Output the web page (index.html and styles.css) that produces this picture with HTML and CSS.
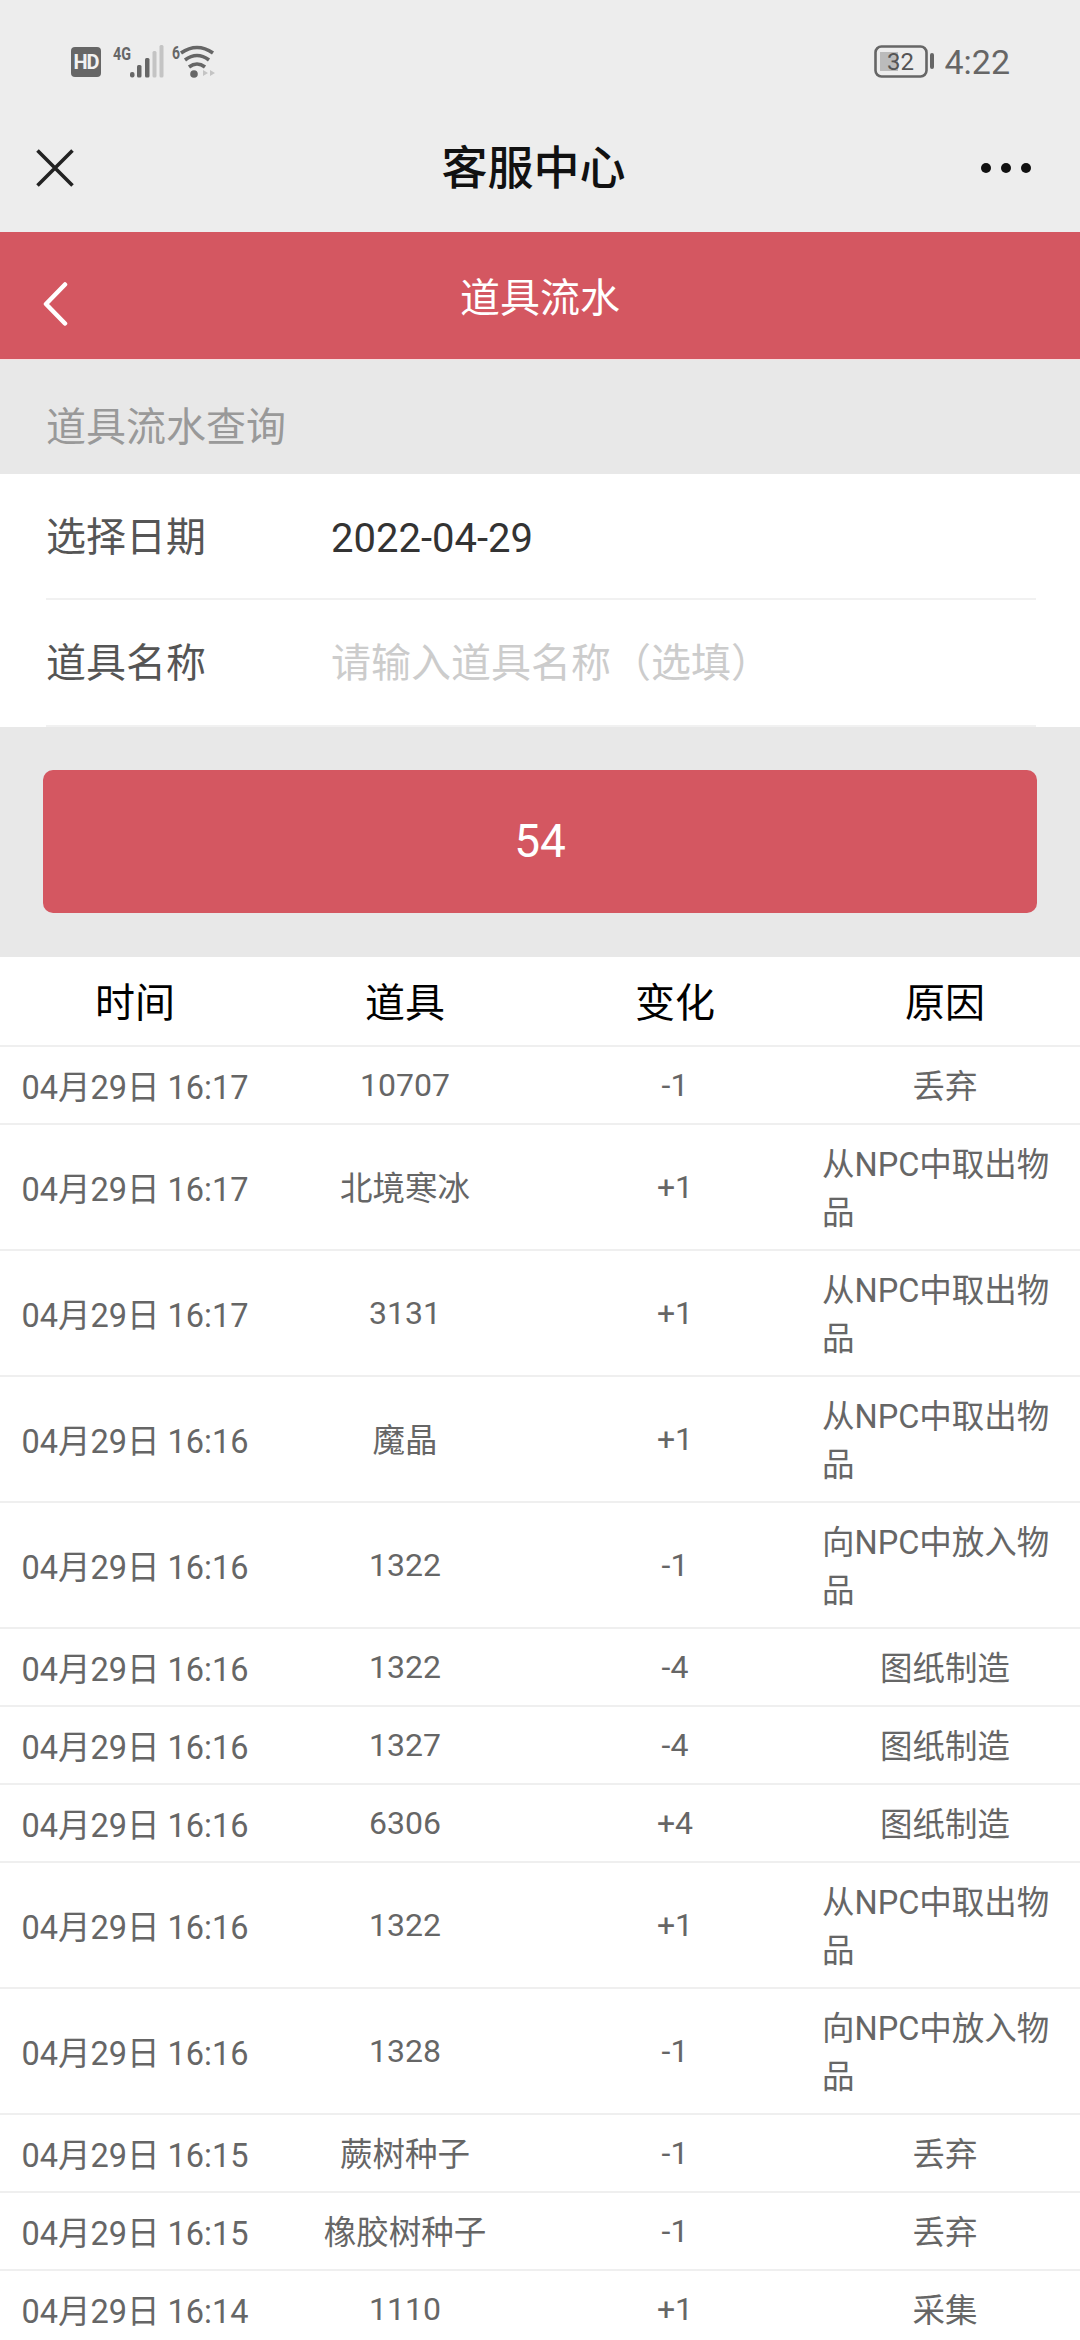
FILE: index.html
```html
<!DOCTYPE html>
<html lang="zh-CN">
<head>
<meta charset="utf-8">
<title>道具流水</title>
<link rel="stylesheet" href="styles.css">
</head>
<body>
<div class="screen">
  <div class="status">
    <div class="status-left">
      <span class="hd">HD</span>
      <svg class="net" width="102" height="50" viewBox="0 -8 102 50">
        <text x="0" y="15" class="net-text" textLength="18" lengthAdjust="spacingAndGlyphs">4G</text>
        <rect x="17" y="27" width="4.5" height="5.5" rx="2" fill="#666"/>
        <rect x="24" y="20" width="4.5" height="12.5" rx="1.5" fill="#666"/>
        <rect x="32" y="13" width="4.5" height="19.5" rx="1.5" fill="#666"/>
        <rect x="39.5" y="6" width="4" height="26.5" rx="1.5" fill="#c4c4c4"/>
        <rect x="46.5" y="0" width="4" height="32.5" rx="1.5" fill="#c4c4c4"/>
        <text x="59" y="14" class="net-text" textLength="8" lengthAdjust="spacingAndGlyphs">6</text>
        <path d="M68 8 Q84 -3 100 8" fill="none" stroke="#666" stroke-width="3.6"/>
        <path d="M72 15 Q84 6 96 15" fill="none" stroke="#666" stroke-width="3.6"/>
        <path d="M76 22 Q84 16 92 22" fill="none" stroke="#666" stroke-width="3.6"/>
        <circle cx="81" cy="29" r="3.8" fill="#666"/>
        <path d="M95 28 L90 25 V31 Z M97 25 V31 L102 28 Z" fill="#c4c4c4"/>
      </svg>
    </div>
    <div class="status-right">
      <svg class="battery" width="62" height="34" viewBox="0 0 62 34">
        <rect x="1.5" y="1.5" width="51" height="30" rx="6" fill="none" stroke="#666" stroke-width="2.6"/>
        <rect x="6" y="7" width="18" height="19" fill="#bbb"/>
        <text x="26.5" y="25" class="battery-text" text-anchor="middle">32</text>
        <rect x="56" y="8" width="4" height="16" rx="2" fill="#666"/>
      </svg>
      <span class="clock">4:22</span>
    </div>
  </div>

  <div class="nav">
    <svg class="nav-close" width="38" height="38" viewBox="0 0 38 38"><path d="M1.5 1.5 L36.5 36.5 M36.5 1.5 L1.5 36.5" stroke="#222" stroke-width="3.6" fill="none"/></svg>
    <div class="nav-title">客服中心</div>
    <svg class="nav-more" width="50" height="12" viewBox="0 0 50 12"><circle cx="5" cy="6" r="5" fill="#111"/><circle cx="25" cy="6" r="5" fill="#111"/><circle cx="45" cy="6" r="5" fill="#111"/></svg>
  </div>

  <div class="header">
    <svg class="back" width="28" height="44" viewBox="0 0 28 44"><path d="M23 2.500 L4 22 L23 41.500" stroke="#fff" stroke-width="4.500" stroke-linecap="round" stroke-linejoin="round" fill="none"/></svg>
    <div class="header-title">道具流水</div>
  </div>

  <div class="section-label">道具流水查询</div>

  <div class="form">
    <div class="form-row"><span class="form-label">选择日期</span><span class="form-value">2022-04-29</span></div>
    <div class="form-row"><span class="form-label">道具名称</span><span class="form-placeholder">请输入道具名称（选填）</span></div>
  </div>

  <div class="action"><div class="submit">54</div></div>

  <div class="table">
    <div class="row head"><div class="cell">时间</div><div class="cell">道具</div><div class="cell">变化</div><div class="cell">原因</div></div>
    <div class="row"><div class="cell time">04月29日 16:17</div><div class="cell num">10707</div><div class="cell num">-1</div><div class="cell">丢弃</div></div>
    <div class="row"><div class="cell time">04月29日 16:17</div><div class="cell">北境寒冰</div><div class="cell num">+1</div><div class="cell">从NPC中取出物品</div></div>
    <div class="row"><div class="cell time">04月29日 16:17</div><div class="cell num">3131</div><div class="cell num">+1</div><div class="cell">从NPC中取出物品</div></div>
    <div class="row"><div class="cell time">04月29日 16:16</div><div class="cell">魔晶</div><div class="cell num">+1</div><div class="cell">从NPC中取出物品</div></div>
    <div class="row"><div class="cell time">04月29日 16:16</div><div class="cell num">1322</div><div class="cell num">-1</div><div class="cell">向NPC中放入物品</div></div>
    <div class="row"><div class="cell time">04月29日 16:16</div><div class="cell num">1322</div><div class="cell num">-4</div><div class="cell">图纸制造</div></div>
    <div class="row"><div class="cell time">04月29日 16:16</div><div class="cell num">1327</div><div class="cell num">-4</div><div class="cell">图纸制造</div></div>
    <div class="row"><div class="cell time">04月29日 16:16</div><div class="cell num">6306</div><div class="cell num">+4</div><div class="cell">图纸制造</div></div>
    <div class="row"><div class="cell time">04月29日 16:16</div><div class="cell num">1322</div><div class="cell num">+1</div><div class="cell">从NPC中取出物品</div></div>
    <div class="row"><div class="cell time">04月29日 16:16</div><div class="cell num">1328</div><div class="cell num">-1</div><div class="cell">向NPC中放入物品</div></div>
    <div class="row"><div class="cell time">04月29日 16:15</div><div class="cell">蕨树种子</div><div class="cell num">-1</div><div class="cell">丢弃</div></div>
    <div class="row"><div class="cell time">04月29日 16:15</div><div class="cell">橡胶树种子</div><div class="cell num">-1</div><div class="cell">丢弃</div></div>
    <div class="row"><div class="cell time">04月29日 16:14</div><div class="cell num">1110</div><div class="cell num">+1</div><div class="cell">采集</div></div>
  </div>
</div>
</body>
</html>
```
FILE: styles.css
```css
* { box-sizing: border-box; }
html, body { margin: 0; padding: 0; }
body { background: #e8e8e8; font-family: Roboto, "Noto Sans CJK SC", sans-serif; }
.screen { width: 1080px; height: 2340px; overflow: hidden; background: #e8e8e8; }

.status { height: 104px; padding: 20px 70px 0 71px; background: #ededed; display: flex; justify-content: space-between; align-items: center; }
.status-left { display: flex; align-items: center; gap: 12px; }
.hd { width: 30px; height: 30px; border-radius: 4px; background: #666; color: #f2f2f2; font-size: 20px; font-weight: 700; line-height: 30px; text-align: center; letter-spacing: -1px; }
.net-text { font-family: Roboto, sans-serif; font-size: 19px; font-weight: 700; fill: #666; }
.net { display: block; }
.status-right { display: flex; align-items: center; gap: 8px; }
.battery { display: block; }
.battery-text { font-family: Roboto, sans-serif; font-size: 24px; fill: #555; }
.clock { font-size: 34px; color: #666; line-height: 40px; }

.nav { height: 128px; padding: 0 49px 0 36px; background: #ededed; display: grid; grid-template-columns: 1fr auto 1fr; align-items: center; }
.nav-close { display: block; }
.nav-title { font-size: 46px; font-weight: 500; color: #111; line-height: 60px; }
.nav-more { display: block; justify-self: end; }

.header { height: 128px; padding: 0 0 0 42px; background: #d45761; display: grid; grid-template-columns: 1fr auto 1fr; align-items: center; border-bottom: 1px solid #f6dfe0; }
.back { display: block; margin-top: 16px; }
.header-title { font-size: 40px; color: #fff; line-height: 56px; margin-left: -42px; margin-top: 6px; }

.section-label { height: 114px; padding: 38px 46px 0; font-size: 40px; line-height: 60px; color: #999; background: #e8e8e8; }

.form { background: #fff; padding: 0 44px 0 46px; }
.form-row { height: 126px; padding-bottom: 4px; display: flex; align-items: center; border-bottom: 2px solid #f1f1f1; font-size: 40px; }
.form-row + .form-row { height: 127px; padding-bottom: 6px; }
.form-label { width: 285px; color: #555; }
.form-value { color: #333; margin-top: 8px; }
.form-placeholder { color: #ccc; }

.action { height: 230px; padding: 43px; background: #e8e8e8; }
.submit { height: 143px; border-radius: 10px; background: #d45761; color: #fff; font-size: 46px; padding-bottom: 2px; display: flex; align-items: center; justify-content: center; }

.table { background: #fff; }
.row { display: grid; grid-template-columns: repeat(4, 270px); align-items: center; padding: 16px 0 12px; border-bottom: 2px solid #efefef; font-size: 32.5px; line-height: 48px; color: #666; }
.row.head { padding: 15px 0 9px; height: 90px; font-size: 40px; line-height: 64px; color: #000; }
.cell { display: flex; justify-content: center; padding: 0 12px; text-align: left; }
.time { padding: 0; margin: 1px 0 -1px; white-space: nowrap; }
.num { margin: -2px 0 2px; font-size: 32px; }
```
